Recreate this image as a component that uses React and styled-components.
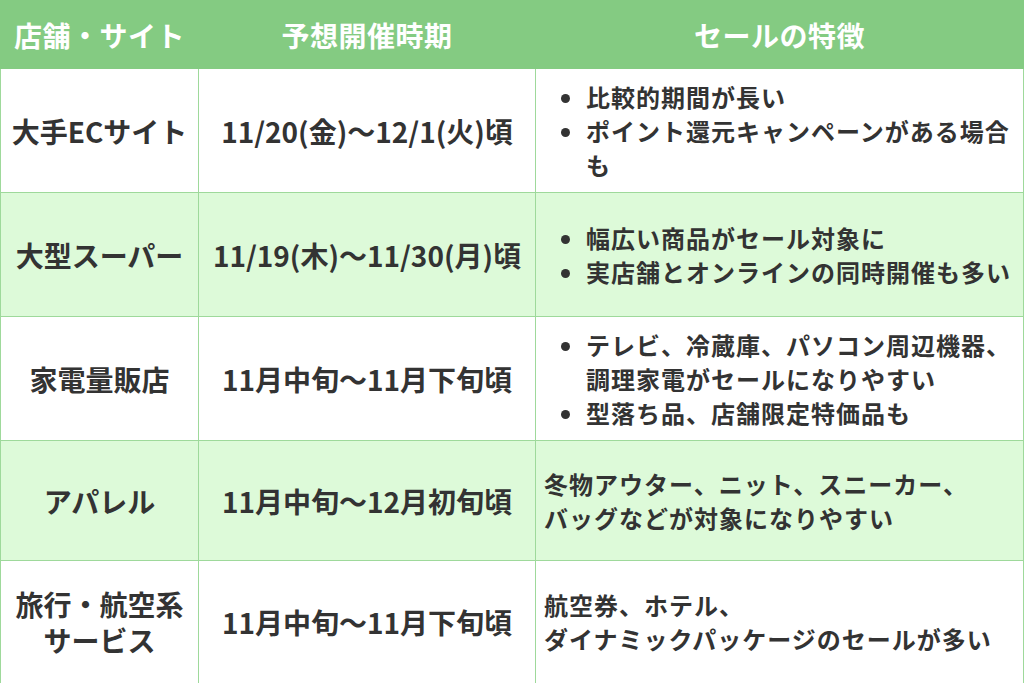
import styled, { createGlobalStyle } from "styled-components";

const rows = [
  {
    shop: "大手ECサイト",
    period: "11/20(金)〜12/1(火)頃",
    points: ["比較的期間が長い", "ポイント還元キャンペーンがある場合も"],
    height: 124,
  },
  {
    shop: "大型スーパー",
    period: "11/19(木)〜11/30(月)頃",
    points: ["幅広い商品がセール対象に", "実店舗とオンラインの同時開催も多い"],
    height: 124,
  },
  {
    shop: "家電量販店",
    period: "11月中旬〜11月下旬頃",
    points: ["テレビ、冷蔵庫、パソコン周辺機器、調理家電がセールになりやすい", "型落ち品、店舗限定特価品も"],
    height: 124,
  },
  {
    shop: "アパレル",
    period: "11月中旬〜12月初旬頃",
    text: ["冬物アウター、ニット、スニーカー、", "バッグなどが対象になりやすい"],
    height: 120,
  },
  {
    shop: "旅行・航空系サービス",
    period: "11月中旬〜11月下旬頃",
    text: ["航空券、ホテル、", "ダイナミックパッケージのセールが多い"],
    height: 123,
  },
];

function App() {
  return (
    <>
      <GlobalStyle />
      <Table>
        <colgroup>
          <col style={{ width: 198 }} />
          <col style={{ width: 337 }} />
          <col />
        </colgroup>
        <thead>
          <HeadRow>
            <HeadCell>店舗・サイト</HeadCell>
            <HeadCell>予想開催時期</HeadCell>
            <HeadCell>セールの特徴</HeadCell>
          </HeadRow>
        </thead>
        <tbody>
          {rows.map((row, i) => (
            <BodyRow key={i} $shaded={i % 2 === 1} style={{ height: row.height }}>
              <NameCell>{row.shop}</NameCell>
              <PeriodCell>{row.period}</PeriodCell>
              <FeatureCell>
                {row.points ? (
                  <Points>
                    {row.points.map((p) => (
                      <li key={p}>{p}</li>
                    ))}
                  </Points>
                ) : (
                  <>
                    {row.text[0]}
                    <br />
                    {row.text[1]}
                  </>
                )}
              </FeatureCell>
            </BodyRow>
          ))}
        </tbody>
      </Table>
    </>
  );
}

export default App;

// ---- styled-components ----
const GlobalStyle = createGlobalStyle`
  html, body {
    margin: 0;
    padding: 0;
    background: #ffffff;
  }
  body {
    font-family: "Noto Sans CJK JP", "Noto Sans", sans-serif;
    color: #333333;
  }
`;

const Table = styled.table`
  width: 1024px;
  border-collapse: collapse;
  table-layout: fixed;
`;

const HeadRow = styled.tr`
  height: 68px;
  background-color: #84cb82;
`;

const HeadCell = styled.th`
  color: #ffffff;
  font-size: 28px;
  font-weight: 700;
  letter-spacing: 0.5px;
  text-align: center;
  padding: 0;
  border: 1px solid #84cb82;
`;

const BodyRow = styled.tr`
  background-color: ${(p) => (p.$shaded ? "#ddfad9" : "#ffffff")};
`;

const Cell = styled.td`
  border: 1px solid #9ed99b;
  padding: 0 8px;
  font-weight: 700;
  vertical-align: middle;
  color: #333333;
`;

const NameCell = styled(Cell)`
  text-align: center;
  font-size: 28px;
  line-height: 36px;
  padding: 0 4px;
`;

const PeriodCell = styled(Cell)`
  text-align: center;
  font-size: 28px;
  padding: 0 4px;
`;

const FeatureCell = styled(Cell)`
  font-size: 24px;
  letter-spacing: 1px;
  line-height: 34px;
  padding: 0 2px 0 8px;
`;

const Points = styled.ul`
  margin: 0;
  padding-left: 42px;
  list-style: disc;
`;
